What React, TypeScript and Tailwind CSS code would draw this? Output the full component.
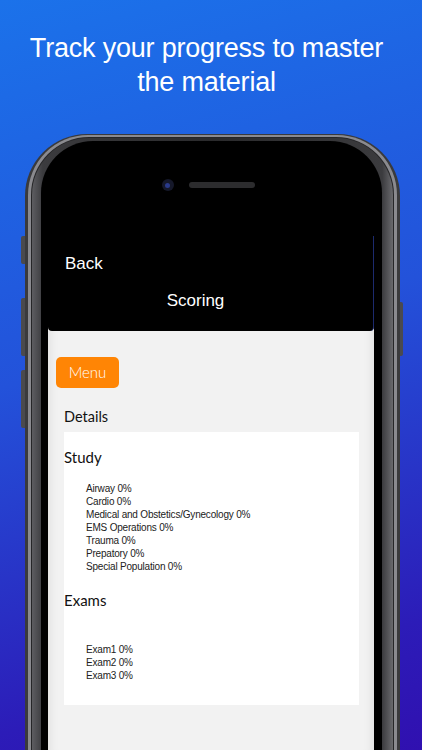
import React from "react";

const study = [
  "Airway 0%",
  "Cardio 0%",
  "Medical and Obstetics/Gynecology 0%",
  "EMS Operations 0%",
  "Trauma 0%",
  "Prepatory 0%",
  "Special Population 0%",
];
const exams = ["Exam1 0%", "Exam2 0%", "Exam3 0%"];

export default function App() {
  return (
    <div
      className="relative w-[422px] h-[750px] overflow-hidden flex flex-col bg-[linear-gradient(165deg,#1b72ea_0%,#2352da_45%,#2c1cb8_85%,#3010b0_100%)]"
      style={{ fontFamily: '"Liberation Sans", Arial, sans-serif' }}
    >
      <div className="pt-[31px] pr-[9px] text-white text-[27px] leading-[34px] text-center tracking-[-0.2px]">
        <div>Track your progress to master</div>
        <div>the material</div>
      </div>

      {/* side buttons */}
      <div className="absolute left-[21px] top-[236px] w-[4px] h-[28px] rounded-l-[2px] bg-[#4a4a4e]" />
      <div className="absolute left-[21px] top-[298px] w-[4px] h-[58px] rounded-l-[2px] bg-[#4a4a4e]" />
      <div className="absolute left-[21px] top-[370px] w-[4px] h-[58px] rounded-l-[2px] bg-[#4a4a4e]" />
      <div className="absolute left-[400px] top-[302px] w-[3px] h-[54px] rounded-r-[2px] bg-[#4a4a4e]" />

      {/* phone */}
      <div className="mt-[35px] ml-[25px] w-[375px] flex-1 rounded-t-[62px] bg-[#3a3a3c] pt-[1px] px-[3px] flex flex-col">
        <div className="flex-1 rounded-t-[60px] bg-[#8a8a8f] pt-[2px] px-[3px] flex flex-col">
          <div className="flex-1 rounded-t-[58px] bg-[#262628] pt-[1px] px-[1px] flex flex-col">
            <div className="flex-1 rounded-t-[57px] bg-[linear-gradient(90deg,#5d5d61_0%,#3b3b3e_3%,#2a2a2c_50%,#3b3b3e_97%,#6a6a6e_100%)] pt-[3px] pl-[9px] pr-[11px] flex flex-col">
              <div className="flex-1 rounded-t-[52px] bg-black pl-[7px] pr-[8px] flex flex-col">
                {/* camera & speaker */}
                <div className="h-[95px] flex items-start justify-center pt-[38px] pr-[6px]">
                  <div className="w-[12px] h-[12px] rounded-full bg-[#15182a] flex items-center justify-center">
                    <div className="w-[5px] h-[5px] rounded-full bg-[#2a3a8a]" />
                  </div>
                  <div className="ml-[15px] mt-[3px] w-[66px] h-[6px] rounded-full bg-[#2c2c2e]" />
                </div>

                {/* app */}
                <div className="flex-1 flex flex-col bg-[#f2f2f2]">
                  <div className="h-[95px] bg-black rounded-b-[4px] border-r border-[#1c2a6e] text-white text-[17px] leading-[20px] pt-[18px]">
                    <div className="pl-[17px] font-medium">Back</div>
                    <div className="mt-[17px] pr-[30px] text-center font-medium">Scoring</div>
                  </div>
                  <div
                    className="flex-1 pl-[8px] pr-[15px] pt-[26px] shadow-[inset_10px_0_10px_-8px_rgba(0,0,0,0.08),inset_-10px_0_10px_-8px_rgba(0,0,0,0.08)]"
                    style={{ fontFamily: 'Lato, "Liberation Sans", sans-serif' }}
                  >
                    <div className="w-[63px] h-[31px] rounded-[5px] bg-[#ff8505] text-white text-[15px] font-light flex items-center justify-center">
                      Menu
                    </div>
                    <div className="pl-[8px] mt-[20px] text-[14.5px] leading-[18px] text-[#111]">Details</div>
                    <div className="ml-[8px] mt-[6px] bg-white pt-[16px] pb-[23px] text-[#111]">
                      <div className="text-[15px] leading-[18px]">Study</div>
                      <div
                        className="pl-[22px] mt-[16px] text-[10px] leading-[13px] tracking-[-0.2px] text-[#222]"
                        style={{ fontFamily: '"Liberation Sans", Arial, sans-serif' }}
                      >
                        {study.map((s) => (
                          <div key={s}>{s}</div>
                        ))}
                      </div>
                      <div className="mt-[18px] text-[15px] leading-[18px]">Exams</div>
                      <div
                        className="pl-[22px] mt-[34px] text-[10px] leading-[13px] tracking-[-0.2px] text-[#222]"
                        style={{ fontFamily: '"Liberation Sans", Arial, sans-serif' }}
                      >
                        {exams.map((s) => (
                          <div key={s}>{s}</div>
                        ))}
                      </div>
                    </div>
                  </div>
                </div>
              </div>
            </div>
          </div>
        </div>
      </div>
    </div>
  );
}
